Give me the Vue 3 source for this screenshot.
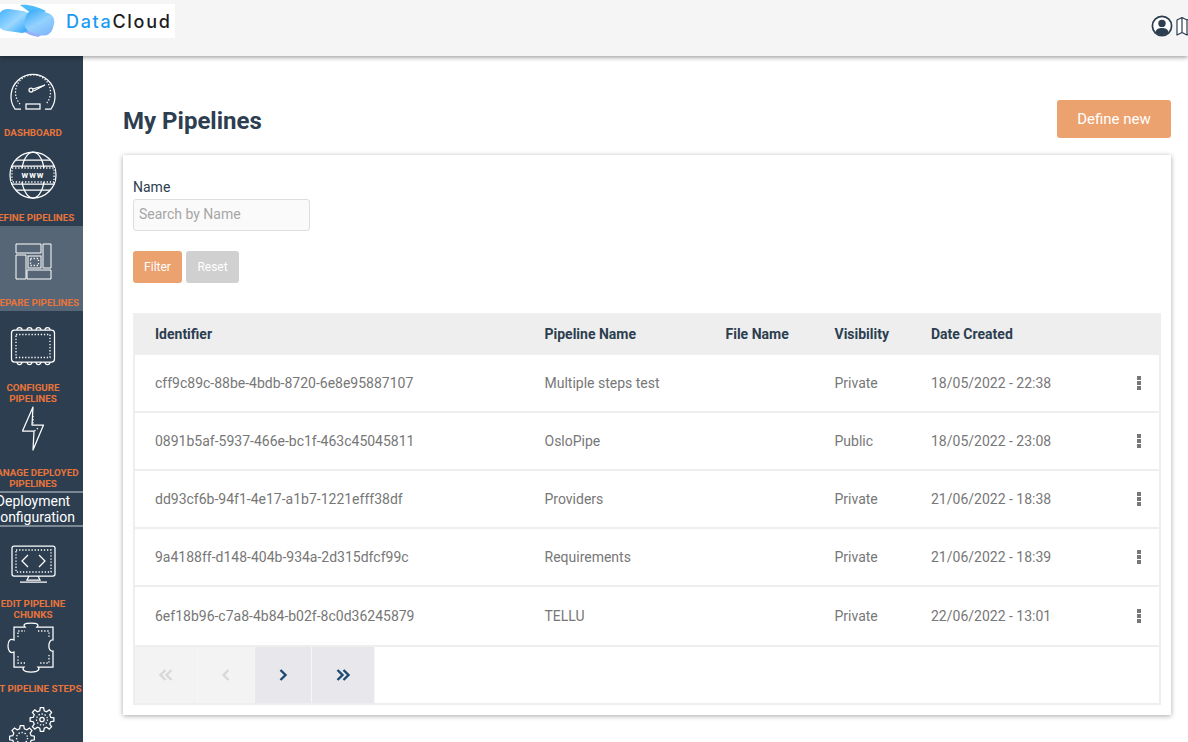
<template>
  <div class="page">
    <header class="topbar">
      <div class="logo">
        <svg class="logo-clouds" width="56" height="34" viewBox="0 0 56 34">
          <defs>
            <linearGradient id="cloudA" x1="0" y1="0" x2="1" y2="0.6">
              <stop offset="0" stop-color="#3fb0fd" />
              <stop offset="0.6" stop-color="#9bd7ff" />
              <stop offset="1" stop-color="#45aefb" />
            </linearGradient>
            <linearGradient id="cloudB" x1="0" y1="0" x2="1" y2="0.8">
              <stop offset="0" stop-color="#2fa5f8" />
              <stop offset="0.55" stop-color="#93d2fe" />
              <stop offset="1" stop-color="#7fb6fa" />
            </linearGradient>
          </defs>
          <path d="M20 1 C28 0 38 3 46 7 L36 13 C30 8 25 5 20 1Z" fill="#4cbcfb" />
          <path d="M22 26 C27 30 32 32 38 33 L46 29 L32 22Z" fill="#99aef9" />
          <rect x="-2" y="6" width="33" height="22" rx="9" fill="url(#cloudA)" transform="rotate(8 15 17)" />
          <rect x="25" y="7" width="29" height="23" rx="9" fill="url(#cloudB)" transform="rotate(16 39 18)" />
        </svg>
        <span class="logo-text"><span class="logo-blue">Data</span>Cloud</span>
      </div>
      <div class="top-icons">
        <svg width="22" height="22" viewBox="0 0 22 22">
          <circle cx="11" cy="11" r="9.6" fill="#fff" stroke="#2c3e50" stroke-width="1.7" />
          <circle cx="11" cy="8.4" r="3.7" fill="#2c3e50" />
          <path d="M4.4 17.4 C5 13.8 8 13 11 13 C14 13 17 13.8 17.6 17.4 C15.8 19.3 13.5 20 11 20 C8.5 20 6.2 19.3 4.4 17.4Z" fill="#2c3e50" />
        </svg>
        <svg width="16" height="22" viewBox="0 0 16 22">
          <path d="M1 5 L6 2.5 L11 5 L16 2.5 V17.5 L11 20 L6 17.5 L1 20Z M6 2.5 V17.5 M11 5 V20" fill="#fff" stroke="#2c3e50" stroke-width="1.2" stroke-linejoin="round" />
        </svg>
      </div>
    </header>

    <div class="layout">
      <aside class="sidebar">
        <a class="nav-item h85 top-12">
          <svg class="nav-icon" width="46" height="44" viewBox="0 0 46 44">
            <path d="M11 41 H5 A22 22 0 1 1 41 41 H35" class="ln" />
            <path d="M10 36 A17.5 17.5 0 1 1 36 36" class="dots" />
            <rect x="16" y="36" width="14" height="5" class="ln" />
            <circle cx="21" cy="22" r="2" class="ln" />
            <path d="M23 21 L35 17 L23.5 23" class="ln" />
          </svg>
          <span class="nav-label">DASHBOARD</span>
        </a>
        <a class="nav-item h85 top-10">
          <svg class="nav-icon" width="48" height="48" viewBox="0 0 48 48">
            <circle cx="24" cy="24" r="23" class="ln" />
            <ellipse cx="24" cy="24" rx="11.5" ry="23" class="ln" />
            <path d="M7 9 H41 M2.5 15 H45.5 M2.5 33 H45.5 M7 39 H41" class="ln" />
            <rect x="2" y="17" width="44" height="14" fill="#2d3e50" />
            <path d="M3 17 H45 V31 H3Z" class="dots" />
            <text x="24" y="27" class="www">www</text>
          </svg>
          <span class="nav-label">DEFINE PIPELINES</span>
        </a>
        <a class="nav-item h85 top-17 active">
          <svg class="nav-icon" width="37" height="37" viewBox="0 0 37 37">
            <path d="M1 1 H26 V10 H1Z M28 1 H36 V25 H28Z M1 12 H11 V36 H1Z M12 27 H36 V36 H12Z" class="ln thin" />
            <rect x="13" y="13" width="13" height="12" class="ln thin" />
            <rect x="15.5" y="15.5" width="8" height="7" class="dots" />
          </svg>
          <span class="nav-label">PREPARE PIPELINES</span>
        </a>
        <a class="nav-item h95 top-14 two-line">
          <svg class="nav-icon" width="46" height="42" viewBox="0 0 46 42">
            <rect x="1.5" y="5" width="43" height="32" rx="3" class="ln" />
            <rect x="6" y="9.5" width="34" height="23" class="dots" />
            <path d="M7 5 a2.5 2.5 0 0 1 5 0 M17 5 a2.5 2.5 0 0 1 5 0 M26 5 a2.5 2.5 0 0 1 5 0 M35 5 a2.5 2.5 0 0 1 5 0" class="ln" />
            <path d="M7 37 a2.5 2.5 0 0 0 5 0 M17 37 a2.5 2.5 0 0 0 5 0 M26 37 a2.5 2.5 0 0 0 5 0 M35 37 a2.5 2.5 0 0 0 5 0" class="ln" />
          </svg>
          <span class="nav-label">CONFIGURE<br />PIPELINES</span>
        </a>
        <a class="nav-item h85 two-line">
          <svg class="nav-icon" width="24" height="46" viewBox="0 0 24 46">
            <path d="M12 1 L1.5 25 H13 L12 44 L22.5 19 H11Z" class="ln" stroke-linejoin="round" />
            <path d="M12 10 V19 M13.5 25 L17 22" class="dots" />
          </svg>
          <span class="nav-label">MANAGE DEPLOYED<br />PIPELINES</span>
        </a>
        <a class="nav-text">Deployment<br />Configuration</a>
        <a class="nav-item h95 top-18 two-line">
          <svg class="nav-icon" width="45" height="38" viewBox="0 0 45 38">
            <rect x="1" y="1" width="43" height="30" rx="2" class="ln" />
            <rect x="5" y="5" width="35" height="22" class="dots" />
            <path d="M17 10 L11 16 L17 22 M28 10 L34 16 L28 22" class="ln" />
            <path d="M18 31 L16 35 H29 L27 31 M9 37 H36" class="ln" />
          </svg>
          <span class="nav-label">EDIT PIPELINE<br />CHUNKS</span>
        </a>
        <a class="nav-item h75">
          <svg class="nav-icon" width="46" height="51" viewBox="0 0 46 51">
            <path d="M4 5 H15 C13 3 14 1 21 1 C28 1 29 3 27 5 H43 V18 C38 17 37 30 43 29 V45 H28 C30 47 29 50 21 50 C13 50 12 47 14 45 H4 V30 C0 32 -2 28 -2 24 C-2 19 0 16 4 18Z" class="ln" />
            <path d="M8 15 V9 H15 M28 9 H39 V15 M39 33 V41 H30 M15 41 H8 V33" class="dots" />
          </svg>
          <span class="nav-label">EDIT PIPELINE STEPS</span>
        </a>
        <a class="nav-item top-8">
          <svg class="nav-icon" width="50" height="50" viewBox="0 0 50 50">
            <path :d="gearPath(34, 14.5, 12, 9)" class="ln" />
            <circle cx="34" cy="14.5" r="5.5" class="dots" />
            <circle cx="34" cy="14.5" r="2.2" class="ln" />
            <path :d="gearPath(14, 33, 12.5, 9.5)" class="ln" />
            <circle cx="14" cy="33" r="5.5" class="dots" />
          </svg>
        </a>
      </aside>

      <main class="content">
        <div class="title-row">
          <h1>My Pipelines</h1>
          <button class="btn btn-new">Define new</button>
        </div>

        <section class="card">
          <label class="field-label" for="name">Name</label>
          <input id="name" class="field-input" type="text" placeholder="Search by Name" />
          <div class="filter-actions">
            <button class="btn btn-small btn-filter">Filter</button>
            <button class="btn btn-small btn-reset">Reset</button>
          </div>

          <div class="table">
            <div class="row head">
              <div>Identifier</div>
              <div>Pipeline Name</div>
              <div>File Name</div>
              <div>Visibility</div>
              <div>Date Created</div>
            </div>
            <div v-for="p in pipelines" :key="p.id" class="row">
              <div>{{ p.id }}</div>
              <div>{{ p.name }}</div>
              <div></div>
              <div>{{ p.visibility }}</div>
              <div>{{ p.created }}</div>
              <div class="menu"><i></i><i></i><i></i></div>
            </div>
            <div class="pager">
              <button class="page-btn wide" disabled>
                <svg width="16" height="14" viewBox="0 0 16 14"><path d="M7.5 2 L2.5 7 L7.5 12 M13.5 2 L8.5 7 L13.5 12" /></svg>
              </button>
              <button class="page-btn" disabled>
                <svg width="10" height="14" viewBox="0 0 10 14"><path d="M7.5 2 L2.5 7 L7.5 12" /></svg>
              </button>
              <button class="page-btn">
                <svg width="10" height="14" viewBox="0 0 10 14"><path d="M2.5 2 L7.5 7 L2.5 12" /></svg>
              </button>
              <button class="page-btn wide">
                <svg width="16" height="14" viewBox="0 0 16 14"><path d="M2.5 2 L7.5 7 L2.5 12 M8.5 2 L13.5 7 L8.5 12" /></svg>
              </button>
            </div>
          </div>
        </section>
      </main>
    </div>
  </div>
</template>

<script setup>
const pipelines = [
  { id: 'cff9c89c-88be-4bdb-8720-6e8e95887107', name: 'Multiple steps test', visibility: 'Private', created: '18/05/2022 - 22:38' },
  { id: '0891b5af-5937-466e-bc1f-463c45045811', name: 'OsloPipe', visibility: 'Public', created: '18/05/2022 - 23:08' },
  { id: 'dd93cf6b-94f1-4e17-a1b7-1221efff38df', name: 'Providers', visibility: 'Private', created: '21/06/2022 - 18:38' },
  { id: '9a4188ff-d148-404b-934a-2d315dfcf99c', name: 'Requirements', visibility: 'Private', created: '21/06/2022 - 18:39' },
  { id: '6ef18b96-c7a8-4b84-b02f-8c0d36245879', name: 'TELLU', visibility: 'Private', created: '22/06/2022 - 13:01' }
]

// Outline of a cog wheel with rounded-ish teeth
const gearPath = (cx, cy, outer, inner) => {
  const teeth = 8
  const step = (Math.PI * 2) / teeth
  let d = ''
  for (let i = 0; i < teeth; i++) {
    const a = i * step
    const pts = [
      [inner, a - step * 0.32],
      [outer, a - step * 0.18],
      [outer, a + step * 0.18],
      [inner, a + step * 0.32]
    ]
    pts.forEach(([r, t], j) => {
      const x = (cx + r * Math.cos(t)).toFixed(2)
      const y = (cy + r * Math.sin(t)).toFixed(2)
      d += `${i === 0 && j === 0 ? 'M' : 'L'}${x} ${y} `
    })
  }
  return d + 'Z'
}
</script>

<style>
html,
body {
  margin: 0;
  overflow: hidden;
  background: #fff;
}
</style>

<style scoped>
.page {
  width: 1188px;
  height: 742px;
  display: flex;
  flex-direction: column;
  overflow: hidden;
  font-family: Roboto, "Liberation Sans", sans-serif;
  font-size: 14px;
  color: #2c3e50;
}

/* Top bar */
.topbar {
  position: relative;
  z-index: 2;
  flex: 0 0 56px;
  display: flex;
  justify-content: space-between;
  background: #f5f5f5;
  box-shadow: 0 1px 5px rgba(0, 0, 0, 0.45);
}

.logo {
  width: 175px;
  height: 34px;
  margin-top: 4px;
  display: flex;
  align-items: center;
  background: #fff;
}

.logo-clouds {
  flex: 0 0 56px;
}

.logo-text {
  margin-left: 10px;
  font-family: Inter, Roboto, sans-serif;
  font-size: 18px;
  font-weight: 500;
  letter-spacing: 1.7px;
  color: #1d1d1f;
}

.logo-blue {
  color: #1a9bf5;
}

.top-icons {
  display: flex;
  gap: 3px;
  margin: 15px -4px 0 0;
  height: 22px;
}

/* Sidebar */
.layout {
  flex: 1;
  display: flex;
  min-height: 0;
}

.sidebar {
  flex: 0 0 83px;
  overflow: hidden;
  background: #2d3e50;
}

.nav-item {
  display: flex;
  flex-direction: column;
  align-items: center;
  box-sizing: border-box;
  padding: 0 17px 3px 0;
}

.nav-item.two-line {
  padding-bottom: 2px;
}

.h85 {
  height: 85px;
}

.h95 {
  height: 95px;
}

.h75 {
  height: 75px;
}

.top-8 {
  padding-top: 8px;
}

.top-10 {
  padding-top: 10px;
}

.top-12 {
  padding-top: 12px;
}

.top-14 {
  padding-top: 14px;
}

.top-17 {
  padding-top: 17px;
}

.top-18 {
  padding-top: 18px;
}

.active {
  background: #566676;
}

.nav-icon {
  flex: none;
  overflow: visible;
}

.nav-label {
  margin-top: auto;
  font-size: 9.8px;
  line-height: 11px;
  font-weight: 700;
  color: #e8743b;
  text-align: center;
  white-space: nowrap;
}

.nav-text {
  display: flex;
  justify-content: center;
  box-sizing: border-box;
  height: 36px;
  padding-right: 17px;
  border-top: 2px solid #7b8792;
  border-bottom: 2px solid #7b8792;
  font-size: 14px;
  line-height: 16px;
  text-align: center;
  white-space: nowrap;
  color: #fff;
}

.ln {
  fill: none;
  stroke: #fff;
  stroke-width: 1.25;
}

.ln.thin {
  stroke-width: 1;
}

.dots {
  fill: none;
  stroke: #fff;
  stroke-width: 1.3;
  stroke-dasharray: 1.3 1.8;
}

.www {
  fill: #fff;
  font-size: 9px;
  font-weight: 700;
  letter-spacing: 1px;
  text-anchor: middle;
}

/* Main */
.content {
  flex: 1;
  min-width: 0;
  box-sizing: border-box;
  padding: 44px 17px 0 40px;
}

.title-row {
  display: flex;
  align-items: center;
  justify-content: space-between;
  height: 38px;
  margin-bottom: 17px;
}

h1 {
  margin: 3px 0 0;
  font-size: 24px;
  font-weight: 700;
  color: #2c3e50;
}

.btn {
  border: 0;
  border-radius: 3px;
  font-family: inherit;
  color: #fff;
}

.btn-new {
  width: 114px;
  height: 38px;
  font-size: 15px;
  background: #eca26f;
}

.card {
  box-sizing: border-box;
  height: 560px;
  padding: 24px 10px 0;
  background: #fff;
  box-shadow: 0 1px 5px rgba(0, 0, 0, 0.35);
}

.field-label {
  display: block;
  height: 20px;
  line-height: 16px;
  font-size: 14px;
}

.field-input {
  display: block;
  box-sizing: border-box;
  width: 177px;
  height: 32px;
  padding: 0 5px 2px;
  border: 1px solid #ddd;
  border-radius: 3px;
  background: #fafafa;
  font-family: inherit;
  font-size: 14px;
}

.field-input::placeholder {
  color: #a6a6a6;
}

.filter-actions {
  display: flex;
  gap: 4px;
  margin-top: 20px;
}

.btn-small {
  height: 32px;
  font-size: 12px;
}

.btn-filter {
  width: 49px;
  background: #eca26f;
}

.btn-reset {
  width: 53px;
  background: #d0d0d0;
}

/* Table */
.table {
  margin-top: 30px;
  height: 392px;
  box-sizing: border-box;
  border: 2px solid #eee;
  border-top: 0;
}

.row {
  display: grid;
  grid-template-columns: 389.5px 181px 109px 96.5px 196px 52px;
  align-items: center;
  height: 58px;
  box-sizing: border-box;
  border-bottom: 2px solid #eee;
  color: #777;
}

.row:nth-child(6) {
  height: 60px;
}

.row > div {
  padding-left: 20px;
}

.row.head {
  height: 42px;
  border-bottom: 0;
  background: #eee;
  font-weight: 700;
  color: #2c3e50;
}

.row .menu {
  grid-column: 6;
  display: flex;
  flex-direction: column;
  gap: 1px;
  padding: 0 0 0 30px;
}

.menu i {
  width: 4px;
  height: 4px;
  background: #777;
}

.pager {
  display: flex;
  height: 56px;
}

.page-btn {
  display: flex;
  align-items: center;
  justify-content: center;
  width: 57px;
  padding: 0;
  border: 0;
  border-right: 1px solid #f6f6f8;
  background: #e8e8ec;
}

.page-btn.wide {
  width: 63px;
}

.page-btn svg {
  fill: none;
  stroke: #1d4a72;
  stroke-width: 2.4;
}

.page-btn:disabled {
  background: #f3f3f3;
}

.page-btn:disabled svg {
  stroke: #d8d8d8;
}
</style>
